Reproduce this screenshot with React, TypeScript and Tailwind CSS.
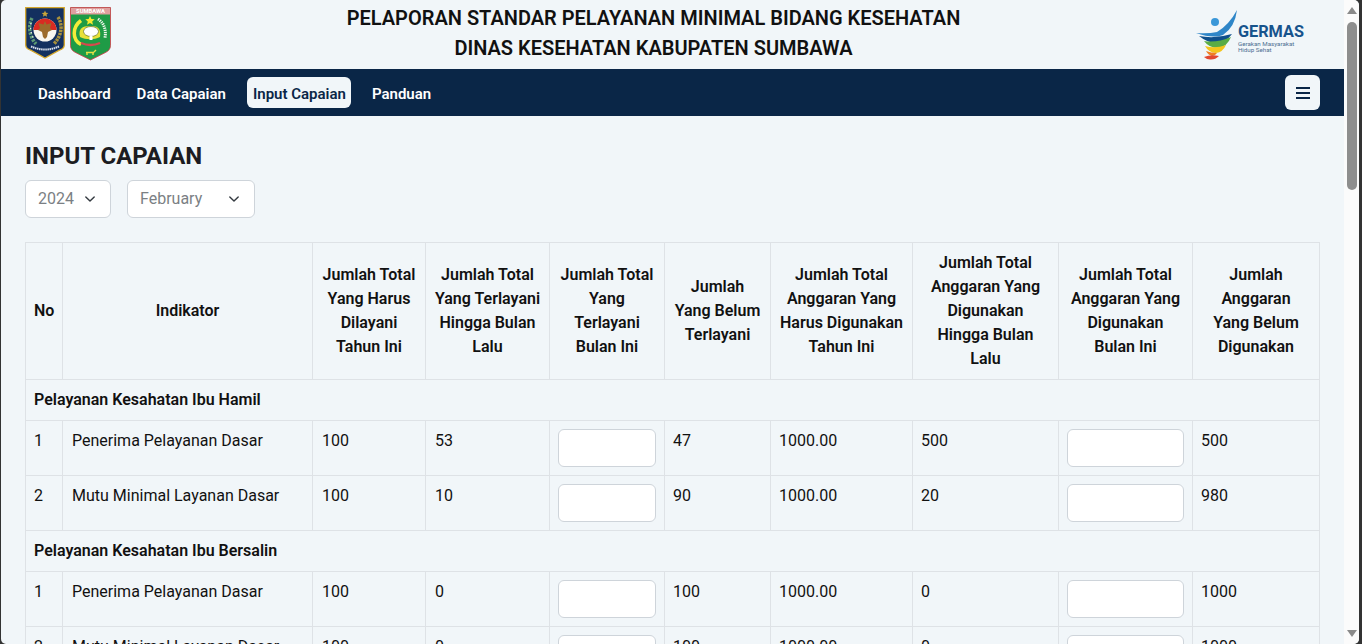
const FONT = "font-['Roboto','Liberation_Sans',sans-serif]";

const headers = [
  "No",
  "Indikator",
  "Jumlah Total Yang Harus Dilayani Tahun Ini",
  "Jumlah Total Yang Terlayani Hingga Bulan Lalu",
  "Jumlah Total Yang Terlayani Bulan Ini",
  "Jumlah Yang Belum Terlayani",
  "Jumlah Total Anggaran Yang Harus Digunakan Tahun Ini",
  "Jumlah Total Anggaran Yang Digunakan Hingga Bulan Lalu",
  "Jumlah Total Anggaran Yang Digunakan Bulan Ini",
  "Jumlah Anggaran Yang Belum Digunakan",
];

const widths = ["w-[37px]", "w-[250px]", "w-[113px]", "w-[124px]", "w-[115px]", "w-[106px]", "w-[142px]", "w-[146px]", "w-[134px]", "w-[127px]"];

type Row = { no: string; name: string; a: string; b: string; c: string; d: string; e: string; f: string };
const groups: { title: string; rows: Row[] }[] = [
  {
    title: "Pelayanan Kesahatan Ibu Hamil",
    rows: [
      { no: "1", name: "Penerima Pelayanan Dasar", a: "100", b: "53", c: "47", d: "1000.00", e: "500", f: "500" },
      { no: "2", name: "Mutu Minimal Layanan Dasar", a: "100", b: "10", c: "90", d: "1000.00", e: "20", f: "980" },
    ],
  },
  {
    title: "Pelayanan Kesahatan Ibu Bersalin",
    rows: [
      { no: "1", name: "Penerima Pelayanan Dasar", a: "100", b: "0", c: "100", d: "1000.00", e: "0", f: "1000" },
      { no: "2", name: "Mutu Minimal Layanan Dasar", a: "100", b: "0", c: "100", d: "1000.00", e: "0", f: "1000" },
    ],
  },
];

function Chevron() {
  return (
    <svg width="16" height="16" viewBox="0 0 16 16" fill="none" className="absolute right-[12px] top-[10px]">
      <path d="M2 5l6 6 6-6" stroke="#343a40" strokeWidth="2" strokeLinecap="round" strokeLinejoin="round" transform="translate(2.4 2.4) scale(.7)" />
    </svg>
  );
}

function Select({ label, w }: { label: string; w: string }) {
  return (
    <div className={`relative h-[38px] ${w} rounded-[6px] border border-[#ced4da] bg-white px-[12px] text-[16px] leading-[36px] text-[#7b7f84]`}>
      {label}
      <Chevron />
    </div>
  );
}

function Emblem() {
  return (
    <svg width="40" height="52" viewBox="0 0 40 52" className="block">
      <path d="M0.700 0.700h38.600v37q0 4-5 5.500L20 51 5.700 43.200q-5-1.500-5-5.500z" fill="#13305f" stroke="#d4a72c" strokeWidth="1.300" />
      <path d="M20 3.500l1 2.200 2.300.2-1.800 1.500.6 2.300-2.100-1.200-2.100 1.200.6-2.300-1.800-1.500 2.300-.2z" fill="#c8a53a" />
      <path d="M7 11c-4 8-3 18 4 26" fill="none" stroke="#5c9a74" strokeWidth="3.500" strokeDasharray="2.500 1.200" />
      <path d="M6 16c-1 6 0 11 3 16" fill="none" stroke="#e9efe9" strokeWidth="1.300" strokeDasharray="1.500 3" />
      <path d="M33 10c5 8 4 18-4 27" fill="none" stroke="#a8913c" strokeWidth="3.500" strokeDasharray="2.500 .8" />
      <circle cx="20" cy="23" r="11.500" fill="#f8f6ef" />
      <path d="M8.500 23a11.500 11.500 0 0 1 23 0z" fill="#d92b22" />
      <path d="M20 14l1.500 3.500 5-1.500-1.500 5 2 2-4 2-1 5-2 2-2-2-1-5-4-2 2-2-1.500-5 5 1.500z" fill="#9c6b2b" />
      <path d="M6 39.500q14 6 28 0" fill="none" stroke="#dde4ee" strokeWidth="2" strokeDasharray="1.500 .6" />
    </svg>
  );
}

function Sumbawa() {
  return (
    <svg width="41" height="54" viewBox="0 0 41 54" className="block">
      <path d="M0.500 0.500h40v38q0 5-6 7.500L20.500 53 6.500 46Q0.500 43.500 0.500 38.500z" fill="#1f9b46" stroke="#d23b46" strokeWidth="0.800" />
      <rect x="1" y="1" width="39" height="6.500" fill="#df9f9e" />
      <text x="20.500" y="6.300" textAnchor="middle" fontSize="5.800" fontWeight="700" fill="#fff" fontFamily="Roboto">SUMBAWA</text>
      <path d="M20 9l1.400 3 3.300.3-2.500 2.200.8 3.200-3-1.700-3 1.700.8-3.200-2.500-2.200 3.300-.3z" fill="#f6e92f" />
      <path d="M11 13.500C2 20 2 33 11 37.500" fill="none" stroke="#f3ec3a" strokeWidth="3.500" />
      <path d="M28 12q9 6 7 19" fill="none" stroke="#f3f6ef" strokeWidth="3" strokeDasharray="1.300 .9" />
      <path d="M10 30c-2-8 2-11 10-11h2c7 0 9 4 8 11-6 3-14 3-20 0z" fill="#e8e13a" />
      <ellipse cx="21" cy="24.500" rx="7.500" ry="5" fill="#fff" stroke="#4d5a1c" strokeWidth="0.600" />
      <rect x="19.500" y="29" width="3" height="4" fill="#fff" />
      <path d="M11 36q9.500 4 19 0" fill="none" stroke="#d7484d" strokeWidth="2.400" />
      <path d="M16 45.500h8M17 45v3M23 45v3M24 45l2-2" stroke="#e8df45" strokeWidth="1.400" fill="none" />
    </svg>
  );
}

function Germas() {
  return (
    <div className="flex items-start">
      <svg width="41" height="50" viewBox="0 0 41 50" className="block shrink-0">
        <circle cx="19" cy="12" r="4" fill="#3a97d8" />
        <path d="M0 23q12 1 21-1 12-7 20-22-2 17-14 25-10 4-27-2z" fill="#2f86c8" />
        <path d="M3 26q16 3 33-2-6 8-13 9-10 1-20-7z" fill="#0f4f8c" />
        <path d="M8 31q13 2 27-4-4 10-13 11-9 0-14-7z" fill="#5aac45" />
        <path d="M9 36q10 3 21-1-3 7-10 8-7 0-11-7z" fill="#f4c51c" />
        <path d="M10 41q5 2 11 2-2 3-5 3-4-1-6-5z" fill="#ef7d22" />
        <path d="M8 47q7-3 15-1-4 4-9 3.500-3 0-6-2.500z" fill="#e2482f" />
      </svg>
      <div className="ml-[1px] mt-[13px] flex flex-col text-[#17538c]">
        <div className="text-[16.300px] leading-[18px] font-bold">GERMAS</div>
        <div className="text-[6.200px] leading-[6px] text-[#4d6f91]">Gerakan Masyarakat</div>
        <div className="text-[6.200px] leading-[6px] text-[#4d6f91]">Hidup Sehat</div>
      </div>
    </div>
  );
}

function Scrollbar() {
  return (
    <div className="flex w-[15px] shrink-0 flex-col items-center bg-[#fbfbfb] rounded-r-[5px]">
      <div className="flex h-[21px] w-full items-center justify-center">
        <svg width="10" height="7" viewBox="0 0 10 7"><path d="M5 0l5 7H0z" fill="#8a8a8a" /></svg>
      </div>
      <div className="mt-[1px] h-[168px] w-[10px] rounded-[5px] bg-[#8e8e8e]" />
      <div className="flex-1" />
      <div className="flex h-[21px] w-full items-center justify-center">
        <svg width="10" height="7" viewBox="0 0 10 7"><path d="M0 0h10L5 7z" fill="#8a8a8a" /></svg>
      </div>
    </div>
  );
}

const td = "border border-[#dee2e6] px-[8px] py-[8px] align-top";
const tdShift = "border border-[#dee2e6] pl-[9px] pr-[7px] py-[8px] align-top";

function Input() {
  return <div className="h-[38px] w-full rounded-[6px] border border-[#ced4da] bg-white" />;
}

export default function App() {
  return (
    <div className={`${FONT} flex h-[644px] w-[1362px] overflow-hidden bg-[#333333] pl-[1px] pr-[3px]`}>
      <div className="flex min-w-0 flex-1 overflow-hidden rounded-[5px] bg-[#f1f6f9]">
        <div className="min-w-0 flex-1 overflow-hidden">
          <header className="flex h-[69px] items-start justify-between pl-[24px] pr-[40px]">
            <div className="flex gap-[5px] pt-[7px]">
              <Emblem />
              <Sumbawa />
            </div>
            <div className="pt-[3px] text-center text-[20px] leading-[30px] font-semibold text-[#111]">
              <div>PELAPORAN STANDAR PELAYANAN MINIMAL BIDANG KESEHATAN</div>
              <div>DINAS KESEHATAN KABUPATEN SUMBAWA</div>
            </div>
            <div className="pt-[10px]">
              <Germas />
            </div>
          </header>

          <nav className="flex h-[47px] items-center justify-between bg-[#0a2647] pl-[24px] pr-[24px]">
            <div className="flex items-center text-[15px] leading-[28px] font-semibold text-white">
              <a className="px-[13px] pt-[3px]">Dashboard</a>
              <a className="px-[13px] pt-[3px]">Data Capaian</a>
              <a className="ml-[8px] rounded-[6px] bg-[#f1f6f9] pl-[6px] pr-[5px] pt-[3px] text-[#0a2647]">Input Capaian</a>
              <a className="ml-[7px] px-[14px] pt-[3px]">Panduan</a>
            </div>
            <button className="flex h-[35px] w-[35px] flex-col items-center justify-center gap-[3px] rounded-[6px] bg-[#f1f6f9]">
              <span className="h-[2px] w-[14px] bg-[#0a2647]" />
              <span className="h-[2px] w-[14px] bg-[#0a2647]" />
              <span className="h-[2px] w-[14px] bg-[#0a2647]" />
            </button>
          </nav>

          <main className="px-[24px] pt-[24px]">
            <h1 className="text-[24px] leading-[32px] font-bold text-[#1c1c22]">INPUT CAPAIAN</h1>
            <div className="mt-[8px] flex gap-[16px]">
              <Select label="2024" w="w-[86px]" />
              <Select label="February" w="w-[128px]" />
            </div>
            <table className="mt-[24px] w-[1294px] table-fixed border-collapse text-[16px] leading-[24px] text-[#111]">
              <colgroup>
                {widths.map((w, i) => (
                  <col key={i} className={w} />
                ))}
              </colgroup>
              <thead>
                <tr>
                  {headers.map((h, i) => (
                    <th
                      key={h}
                      className={
                        i === 9
                          ? "border border-[#dee2e6] px-[10px] py-[8px] text-center align-middle font-semibold"
                          : "border border-[#dee2e6] px-[8px] py-[8px] text-center align-middle font-semibold"
                      }
                    >
                      {h}
                    </th>
                  ))}
                </tr>
              </thead>
              <tbody>
                {groups.map((g) => [
                  <tr key={g.title}>
                    <td colSpan={10} className={`${td} font-semibold`}>{g.title}</td>
                  </tr>,
                  ...g.rows.map((r) => (
                    <tr key={g.title + r.no}>
                      <td className={td}>{r.no}</td>
                      <td className={tdShift}>{r.name}</td>
                      <td className={tdShift}>{r.a}</td>
                      <td className={tdShift}>{r.b}</td>
                      <td className={td}><Input /></td>
                      <td className={td}>{r.c}</td>
                      <td className={td}>{r.d}</td>
                      <td className={td}>{r.e}</td>
                      <td className={td}><Input /></td>
                      <td className={td}>{r.f}</td>
                    </tr>
                  )),
                ])}
              </tbody>
            </table>
          </main>
        </div>
        <Scrollbar />
      </div>
    </div>
  );
}
